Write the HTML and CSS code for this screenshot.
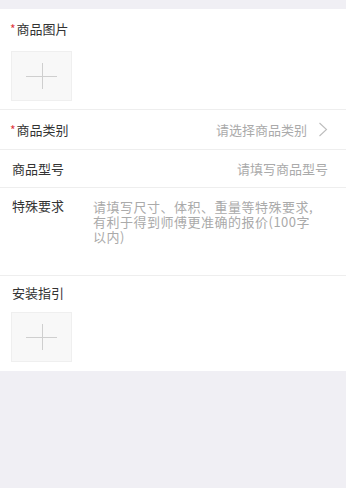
FILE: index.html
```html
<!DOCTYPE html>
<html lang="zh-CN">
<head>
<meta charset="utf-8">
<link rel="stylesheet" href="styles.css">
</head>
<body>
<div class="page">
  <div class="top-gap"></div>
  <section class="block block-img">
    <div class="label"><span class="req">*</span>商品图片</div>
    <div class="upload"><span class="plus-h"></span><span class="plus-v"></span></div>
  </section>
  <div class="row row-cat">
    <div class="label"><span class="req">*</span>商品类别</div>
    <div class="value">请选择商品类别
      <svg class="chev" width="10" height="15" viewBox="0 0 10 15"><path d="M1.5 1 L8.5 7.5 L1.5 14" fill="none" stroke="#bdbdbd" stroke-width="1.1"/></svg>
    </div>
  </div>
  <div class="row row-model">
    <div class="label">商品型号</div>
    <div class="value value-plain">请填写商品型号</div>
  </div>
  <div class="row row-special">
    <div class="label label-fixed">特殊要求</div>
    <div class="textarea">请填写尺寸、体积、重量等特殊要求, 有利于得到师傅更准确的报价(100字以内)</div>
  </div>
  <section class="block block-guide">
    <div class="label">安装指引</div>
    <div class="upload"><span class="plus-h"></span><span class="plus-v"></span></div>
  </section>
  <div class="gray-fill"></div>
  <div class="footer"></div>
</div>
</body>
</html>
```
FILE: styles.css
```css
* { box-sizing: border-box; }
html, body { margin: 0; padding: 0; }
body {
  background: #f0eff4;
  font-family: "Noto Sans CJK SC", "Noto Sans", sans-serif;
  font-size: 13px;
  color: #333;
  width: 346px;
  height: 500px;
  overflow: hidden;
}
.page { display: flex; flex-direction: column; height: 500px; }
.top-gap { height: 9px; flex: none; }
.block { background: #fff; flex: none; }
.block-img { height: 101px; padding: 11px 0 0 12px; border-bottom: 1px solid #eeeeee; }
.block-guide { height: 95px; padding: 8px 0 0 12px; }
.label { line-height: 18px; height: 18px; color: #333; white-space: nowrap; }
.req { color: #e0393e; font-size: 12px; margin-left: -2px; margin-right: 1px; }
.upload {
  position: relative;
  width: 61px;
  height: 50px;
  margin-left: -1px;
  background: #f8f8f8;
  border: 1px solid #efefef;
}
.block-img .upload { margin-top: 13px; }
.block-guide .upload { margin-top: 10px; }
.plus-h { position: absolute; left: 14px; right: 14px; top: 24px; height: 1px; background: #cfcfcf; }
.plus-v { position: absolute; top: 11px; bottom: 11px; left: 30px; width: 1px; background: #cfcfcf; }
.row {
  background: #fff;
  display: flex;
  flex: none;
  padding: 0 12px;
  border-bottom: 1px solid #eeeeee;
}
.row-cat { height: 40px; align-items: center; justify-content: space-between; }
.row-model { height: 38px; align-items: center; justify-content: space-between; padding-right: 18px; }
.row-special { height: 88px; align-items: flex-start; padding-top: 9px; }
.value { color: #aaa; display: flex; align-items: center; white-space: nowrap; }
.chev { margin-left: 11px; margin-right: 6px; }
.label-fixed { width: 81px; flex: none; }
.textarea {
  color: #aaa;
  line-height: 15px;
  padding-top: 2px;
  width: 226px;
  letter-spacing: 0.5px;
}
.gray-fill { height: 117px; flex: none; }
.footer { flex: 1; background: #fff; }
```
